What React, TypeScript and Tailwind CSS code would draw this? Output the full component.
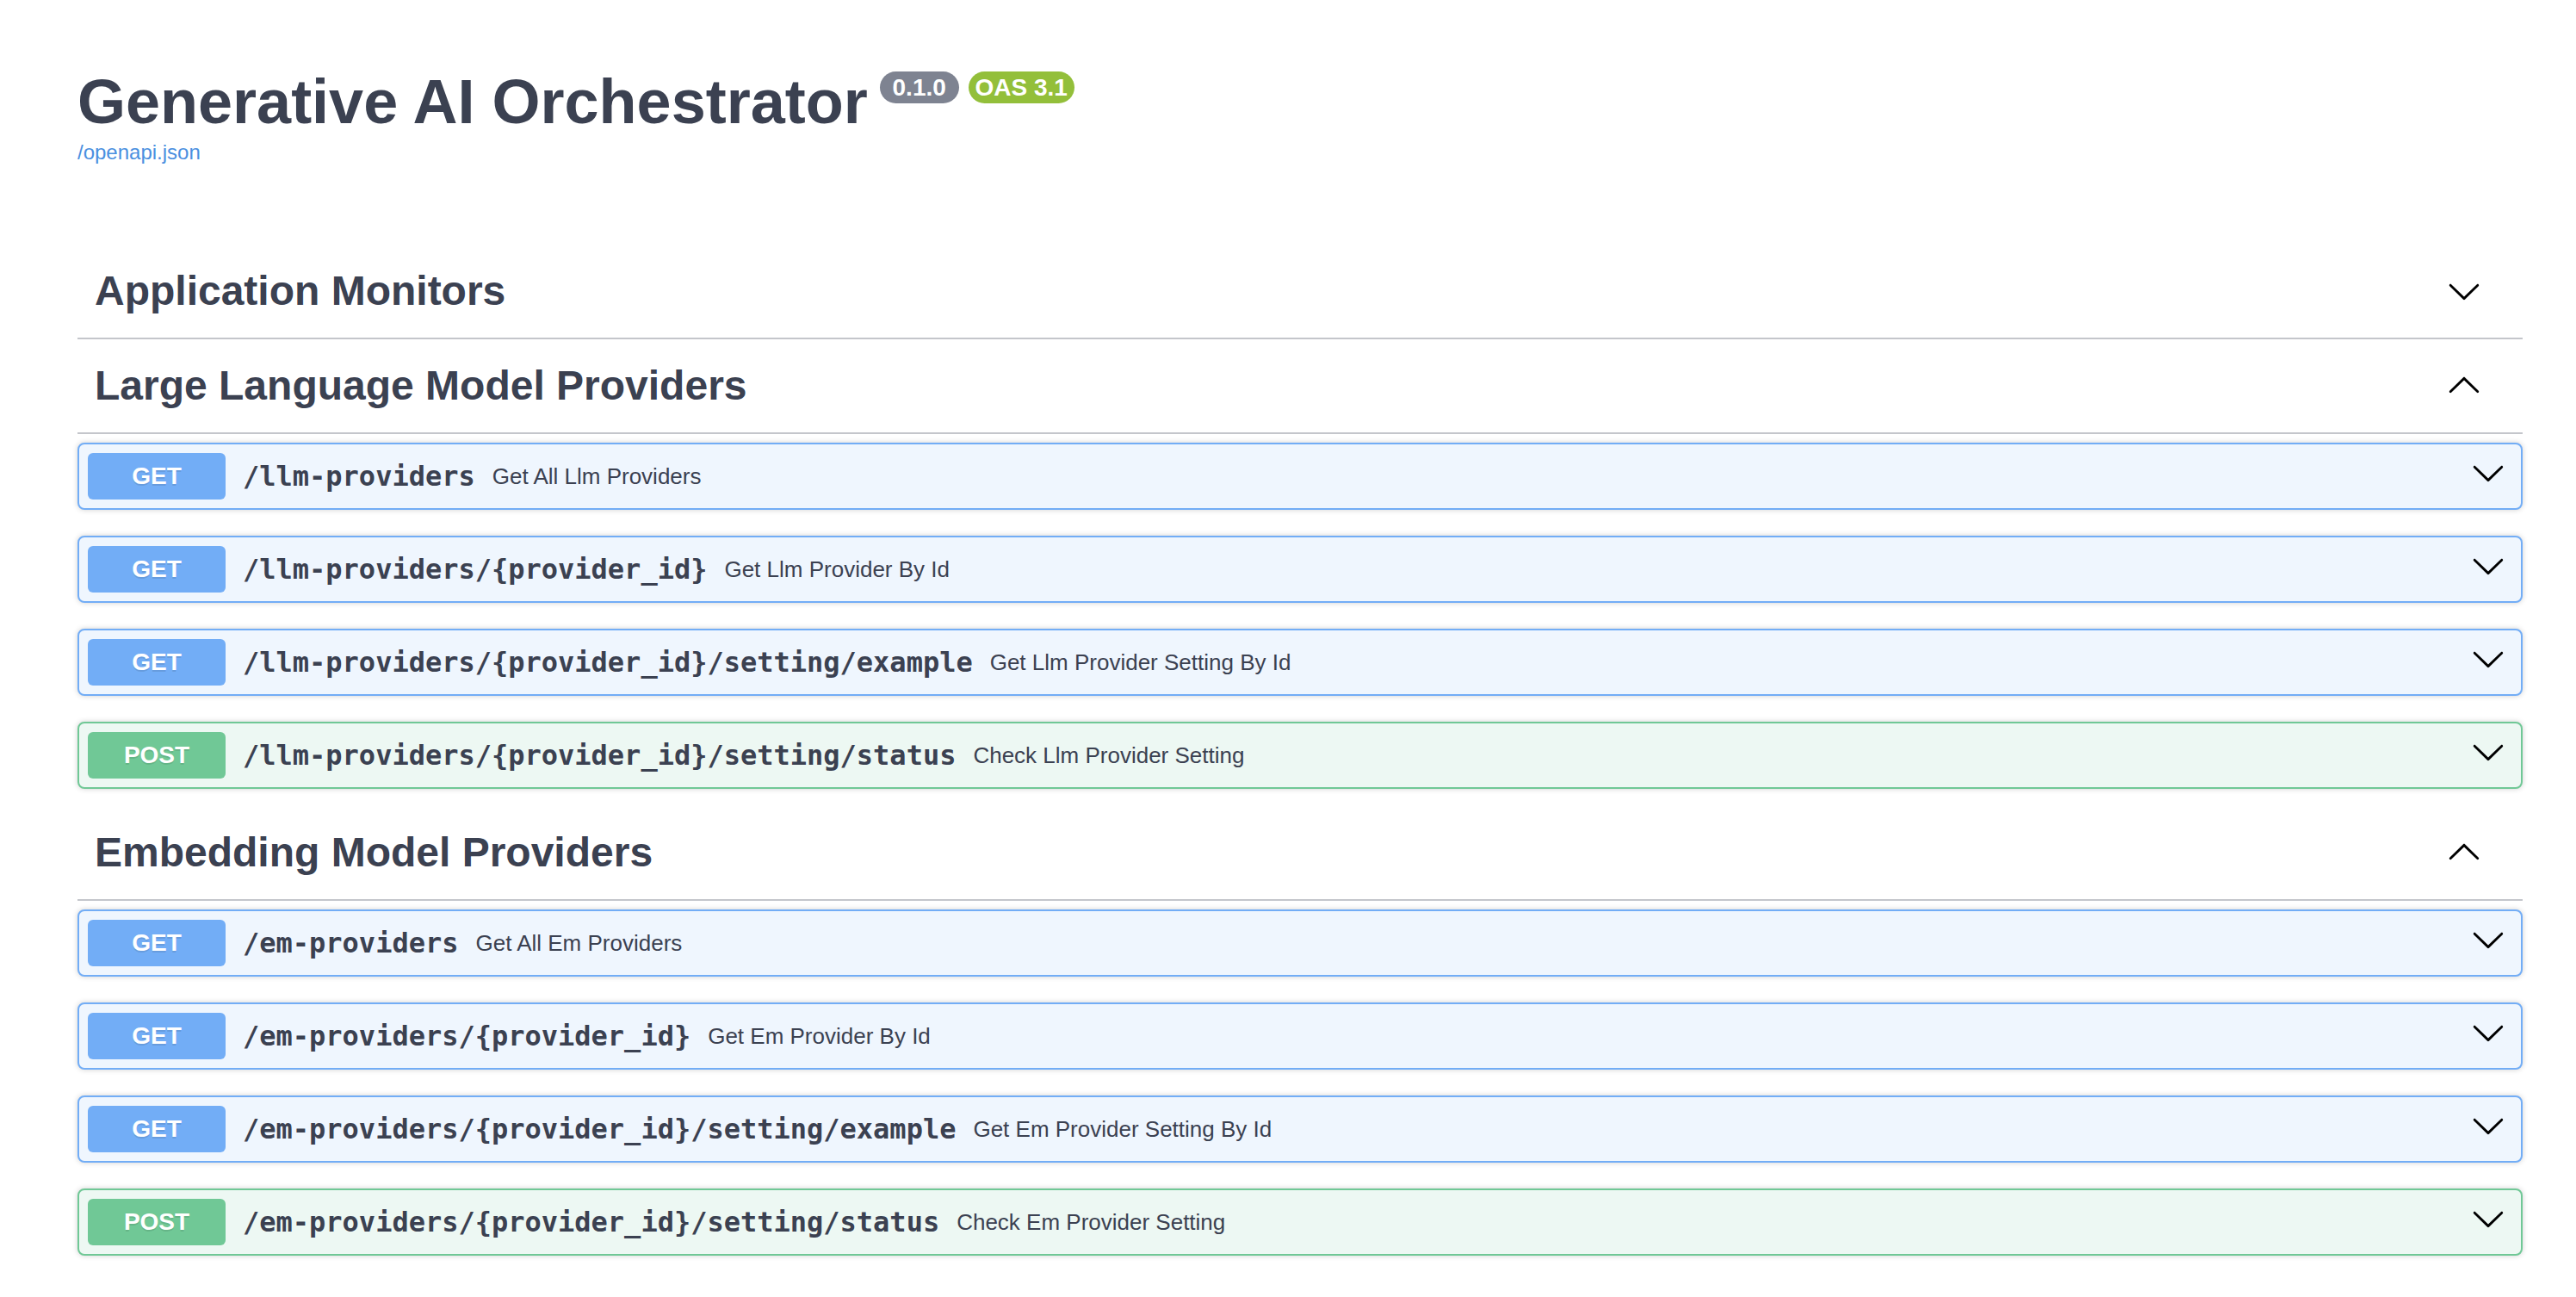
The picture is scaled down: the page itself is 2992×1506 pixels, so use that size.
import React from "react";

const DOWN =
  "M17.418 6.109c.272-.268.709-.268.979 0s.271.701 0 .969l-7.908 7.83c-.27.268-.707.268-.979 0l-7.908-7.83c-.27-.268-.27-.701 0-.969.271-.268.709-.268.979 0L10 13.25l7.418-7.141z";

function Chevron({ up = false, className = "" }: { up?: boolean; className?: string }) {
  return (
    <svg width="40" height="40" viewBox="0 0 20 20" className={className} aria-hidden="true">
      <path d={DOWN} fill="#000" transform={up ? "rotate(180 10 10)" : undefined} />
    </svg>
  );
}

type Op = { method: "GET" | "POST"; path: string; desc: string };

function Operation({ op }: { op: Op }) {
  const isGet = op.method === "GET";
  return (
    <div
      className={
        isGet
          ? "flex h-[78px] items-center rounded-[8px] border-2 border-[#72adf6] bg-[#eff6fe] pl-[10px] pr-[18px] shadow-[0_0_6px_rgba(0,0,0,0.19)]"
          : "flex h-[78px] items-center rounded-[8px] border-2 border-[#70c896] bg-[#edf8f3] pl-[10px] pr-[18px] shadow-[0_0_6px_rgba(0,0,0,0.19)]"
      }
    >
      <div
        className={
          isGet
            ? "flex h-[54px] w-[160px] shrink-0 items-center justify-center rounded-[6px] bg-[#72adf6] text-[28px] font-bold text-white [text-shadow:0_2px_0_rgba(0,0,0,0.1)]"
            : "flex h-[54px] w-[160px] shrink-0 items-center justify-center rounded-[6px] bg-[#70c896] text-[28px] font-bold text-white [text-shadow:0_2px_0_rgba(0,0,0,0.1)]"
        }
      >
        {op.method}
      </div>
      <div className="ml-[20px] flex flex-1 items-center">
        <span className="pr-[20px] font-['DejaVu_Sans_Mono',monospace] text-[32px] font-bold text-[#3b4151]">
          {op.path}
        </span>
        <span className="text-[26px] text-[#3b4151]">{op.desc}</span>
      </div>
      <Chevron className="mb-[8px] shrink-0" />
    </div>
  );
}

function TagHeader({ title, up }: { title: string; up: boolean }) {
  return (
    <div className="flex h-[110px] items-center border-b-2 border-[#c4c6cb] pl-[20px] pr-[48px]">
      <h3 className="flex-1 text-[48px] font-bold text-[#3b4151]">{title}</h3>
      <Chevron up={up} />
    </div>
  );
}

const llm: Op[] = [
  { method: "GET", path: "/llm-providers", desc: "Get All Llm Providers" },
  { method: "GET", path: "/llm-providers/{provider_id}", desc: "Get Llm Provider By Id" },
  { method: "GET", path: "/llm-providers/{provider_id}/setting/example", desc: "Get Llm Provider Setting By Id" },
  { method: "POST", path: "/llm-providers/{provider_id}/setting/status", desc: "Check Llm Provider Setting" },
];

const em: Op[] = [
  { method: "GET", path: "/em-providers", desc: "Get All Em Providers" },
  { method: "GET", path: "/em-providers/{provider_id}", desc: "Get Em Provider By Id" },
  { method: "GET", path: "/em-providers/{provider_id}/setting/example", desc: "Get Em Provider Setting By Id" },
  { method: "POST", path: "/em-providers/{provider_id}/setting/status", desc: "Check Em Provider Setting" },
];

export default function App() {
  return (
    <div className="min-h-[1506px] bg-white font-['Liberation_Sans',Arial,sans-serif] text-[#3b4151]">
      <div className="pl-[90px] pr-[62px] pt-[78px]">
        <div className="flex items-start">
          <h2 className="text-[72px] font-bold leading-[80px] text-[#3b4151]">Generative AI Orchestrator</h2>
          <span className="ml-[14px] mt-[5px] flex h-[37px] w-[92px] items-center justify-center rounded-full bg-[#7e8391] text-[28px] font-bold leading-[37px] text-white">
            0.1.0
          </span>
          <span className="ml-[11px] mt-[5px] flex h-[37px] w-[123px] items-center justify-center rounded-full bg-[#93bf3a] text-[28px] font-bold leading-[37px] text-white">
            OAS 3.1
          </span>
        </div>
        <a className="mt-[5px] block text-[24px] leading-[28px] text-[#4a8fe0]">/openapi.json</a>

        <div className="mt-[93px] flex flex-col">
          <TagHeader title="Application Monitors" up={false} />
          <TagHeader title="Large Language Model Providers" up={true} />
          <div className="mb-[20px] mt-[10px] flex flex-col gap-[30px]">
            {llm.map((o) => (
              <Operation key={o.path} op={o} />
            ))}
          </div>
          <TagHeader title="Embedding Model Providers" up={true} />
          <div className="mb-[20px] mt-[10px] flex flex-col gap-[30px]">
            {em.map((o) => (
              <Operation key={o.path} op={o} />
            ))}
          </div>
        </div>
      </div>
    </div>
  );
}
